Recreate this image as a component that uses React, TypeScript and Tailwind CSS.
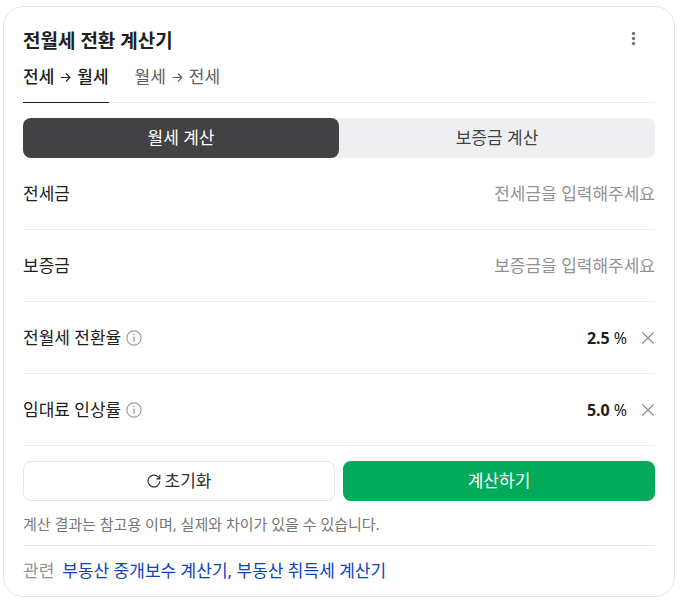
import React, { useState } from "react";
import clsx from "clsx";

const ArrowIcon = () => (
  <svg className="w-[11px] h-[11px]" viewBox="0 0 11 11" fill="none" stroke="currentColor" strokeWidth="1.1" aria-hidden="true">
    <path d="M0.8 5.5h9M5.9 1.5l4 4-4 4" />
  </svg>
);

const MoreIcon = () => (
  <svg className="w-4 h-4" viewBox="0 0 16 16" fill="currentColor" aria-hidden="true">
    <circle cx="8.5" cy="2.5" r="1.7" />
    <circle cx="8.5" cy="7.5" r="1.7" />
    <circle cx="8.5" cy="12.5" r="1.7" />
  </svg>
);

const InfoIcon = () => (
  <svg className="w-4 h-4" viewBox="0 0 16 16" fill="none" stroke="currentColor" aria-hidden="true">
    <circle cx="8" cy="8" r="7.1" strokeWidth="1.1" />
    <path d="M8 6.6v5.2" strokeWidth="1.2" />
    <circle cx="8" cy="4.5" r="0.8" fill="currentColor" stroke="none" />
  </svg>
);

const ClearIcon = () => (
  <svg className="w-[14px] h-[14px]" viewBox="0 0 14 14" fill="none" stroke="currentColor" strokeWidth="1.2" aria-hidden="true">
    <path d="M1.3 1.3l11.4 11.4M12.7 1.3L1.3 12.7" />
  </svg>
);

const ResetIcon = () => (
  <svg className="w-[14px] h-[14px]" viewBox="0 0 14 14" fill="none" stroke="currentColor" strokeWidth="1.2" aria-hidden="true">
    <path d="M12.8 7.3A5.9 5.9 0 1 1 11.4 3.2L12.6 4.6" />
    <path d="M12.8 0.8v4H9.2" />
  </svg>
);

interface RowProps {
  id: string;
  label: string;
  info?: boolean;
  children: React.ReactNode;
}
const Row: React.FC<RowProps> = ({ id, label, info, children }) => {
  return (
    <div className="flex h-[72px] items-center justify-between border-b border-[#ececec]">
      <div className="flex shrink-0 items-center gap-[5px]">
        <label htmlFor={id}>{label}</label>
        {info && (
          <button type="button" aria-label={`${label} 안내`} className="text-[#999]">
            <InfoIcon />
          </button>
        )}
      </div>
      {children}
    </div>
  );
};

interface RateProps {
  id: string;
  value: string;
  onChange: (value: string) => void;
}
const RateField: React.FC<RateProps> = ({ id, value, onChange }) => {
  return (
    <div className="flex items-center">
      <input id={id} value={value} onChange={(e) => onChange(e.target.value)} className="w-20 text-right text-base font-bold outline-none" />
      <span className="ml-1 text-base">%</span>
      <button type="button" aria-label="지우기" className="ml-[14px] text-[#808080]" onClick={() => onChange("")}>
        <ClearIcon />
      </button>
    </div>
  );
};

const tabs = [
  { from: "전세", to: "월세" },
  { from: "월세", to: "전세" },
];
const modes = ["월세 계산", "보증금 계산"];

export default function App() {
  const [tab, setTab] = useState(0);
  const [mode, setMode] = useState(0);
  const [jeonse, setJeonse] = useState("");
  const [deposit, setDeposit] = useState("");
  const [rate, setRate] = useState("2.5");
  const [increase, setIncrease] = useState("5.0");

  const reset = () => {
    setJeonse("");
    setDeposit("");
    setRate("2.5");
    setIncrease("5.0");
  };

  return (
    <main className="pt-[6px] pr-[5px] pl-[3px] font-['Noto_Sans','Noto_Sans_CJK_KR',sans-serif] text-[17px] leading-6 text-[#202020]">
      <section className="rounded-[20px] border border-[#e6e6e6] bg-white px-[19px]">
        <header className="flex items-start justify-between pt-5">
          <h2 className="text-[19px] leading-7 font-bold">전월세 전환 계산기</h2>
          <button type="button" aria-label="더보기" className="mt-1 mr-[14px] text-[#767676]">
            <MoreIcon />
          </button>
        </header>

        <div role="tablist" className="mt-2 flex gap-[26px] border-b border-[#ececec]">
          {tabs.map((t, i) => (
            <button
              key={t.from}
              type="button"
              role="tab"
              aria-selected={tab === i}
              onClick={() => setTab(i)}
              className={clsx(
                "-mb-px flex items-center gap-[6px] border-b pt-0.5 pb-[13px]",
                tab === i ? "border-[#202020] font-medium" : "border-transparent text-[#606060]"
              )}
            >
              <span>{t.from}</span>
              <ArrowIcon />
              <span>{t.to}</span>
            </button>
          ))}
        </div>

        <div className="mt-[15px] flex rounded-lg bg-[#efeff1]">
          {modes.map((m, i) => (
            <button
              key={m}
              type="button"
              aria-pressed={mode === i}
              onClick={() => setMode(i)}
              className={clsx("h-10 flex-1 rounded-lg", mode === i ? "bg-[#424244] text-white" : "text-[#424242]")}
            >
              {m}
            </button>
          ))}
        </div>

        <form onSubmit={(e) => e.preventDefault()}>
          <Row id="jeonse" label="전세금">
            <input
              id="jeonse"
              value={jeonse}
              onChange={(e) => setJeonse(e.target.value)}
              placeholder="전세금을 입력해주세요"
              className="min-w-0 flex-1 text-right outline-none placeholder:text-[#929294]"
            />
          </Row>
          <Row id="deposit" label="보증금">
            <input
              id="deposit"
              value={deposit}
              onChange={(e) => setDeposit(e.target.value)}
              placeholder="보증금을 입력해주세요"
              className="min-w-0 flex-1 text-right outline-none placeholder:text-[#929294]"
            />
          </Row>
          <Row id="rate" label="전월세 전환율" info>
            <RateField id="rate" value={rate} onChange={setRate} />
          </Row>
          <Row id="increase" label="임대료 인상률" info>
            <RateField id="increase" value={increase} onChange={setIncrease} />
          </Row>

          <div className="mt-[15px] grid grid-cols-2 gap-2">
            <button type="button" onClick={reset} className="flex h-10 items-center justify-center gap-1 rounded-lg border border-[#e6e6e6] text-[#303030]">
              <ResetIcon />
              초기화
            </button>
            <button type="submit" className="h-10 rounded-lg bg-[#03aa5a] text-white">
              계산하기
            </button>
          </div>
        </form>

        <p className="mt-[11px] text-[15px] text-[#767676]">계산 결과는 참고용 이며, 실제와 차이가 있을 수 있습니다.</p>

        <footer className="mt-[9px] flex gap-2 border-t border-[#e6e6e6] py-[13px]">
          <span className="text-[#929294]">관련</span>
          <div className="text-[#0c43b7]">
            <a href="#brokerage">부동산 중개보수 계산기</a>, <a href="#tax">부동산 취득세 계산기</a>
          </div>
        </footer>
      </section>
    </main>
  );
}
